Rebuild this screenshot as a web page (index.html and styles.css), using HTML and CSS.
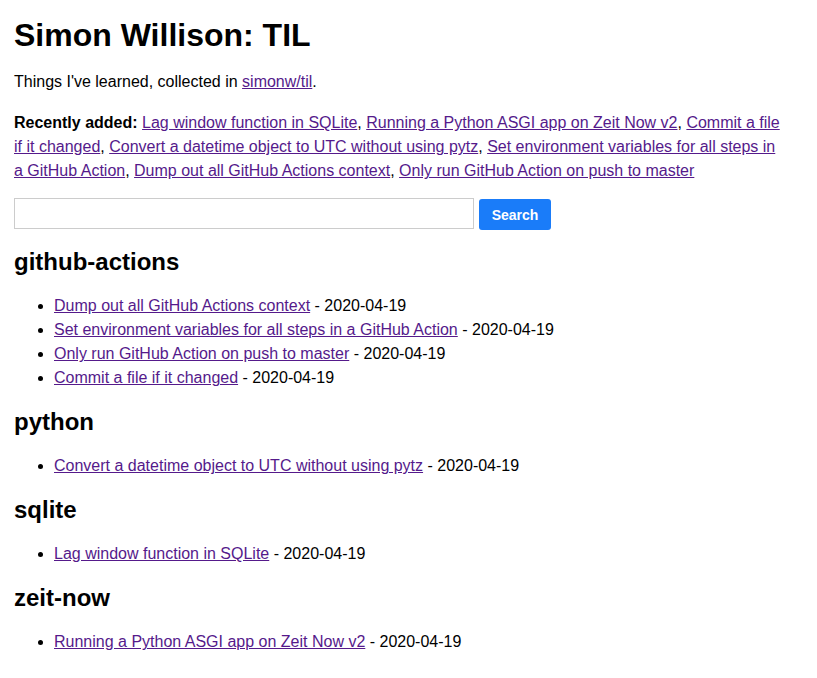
FILE: index.html
```html
<!DOCTYPE html>
<html>
<head>
<meta charset="utf-8">
<title>Simon Willison: TIL</title>
<link rel="stylesheet" href="styles.css">
</head>
<body>
<h1 class="title">Simon Willison: TIL</h1>
<p class="intro">Things I've learned, collected in <a href="#">simonw/til</a>.</p>
<p class="recent"><strong>Recently added:</strong> <a href="#">Lag window function in SQLite</a>, <a href="#">Running a Python ASGI app on Zeit Now v2</a>, <a href="#">Commit a file if it changed</a>, <a href="#">Convert a datetime object to UTC without using pytz</a>, <a href="#">Set environment variables for all steps in a GitHub Action</a>, <a href="#">Dump out all GitHub Actions context</a>, <a href="#">Only run GitHub Action on push to master</a></p>
<form class="search">
<input class="search-input" type="search" name="q">
<button class="search-button" type="button">Search</button>
</form>
<h2 class="topic">github-actions</h2>
<ul class="items">
<li><a href="#">Dump out all GitHub Actions context</a> - 2020-04-19</li>
<li><a href="#">Set environment variables for all steps in a GitHub Action</a> - 2020-04-19</li>
<li><a href="#">Only run GitHub Action on push to master</a> - 2020-04-19</li>
<li><a href="#">Commit a file if it changed</a> - 2020-04-19</li>
</ul>
<h2 class="topic">python</h2>
<ul class="items">
<li><a href="#">Convert a datetime object to UTC without using pytz</a> - 2020-04-19</li>
</ul>
<h2 class="topic">sqlite</h2>
<ul class="items">
<li><a href="#">Lag window function in SQLite</a> - 2020-04-19</li>
</ul>
<h2 class="topic">zeit-now</h2>
<ul class="items">
<li><a href="#">Running a Python ASGI app on Zeit Now v2</a> - 2020-04-19</li>
</ul>
</body>
</html>
```

FILE: styles.css
```css
html { background: #fff; }
body {
  margin: 0;
  padding: 0 14px;
  max-width: 772px;
  font-family: "Liberation Sans", Arial, Helvetica, sans-serif;
  font-size: 16px;
  line-height: 1.5;
  color: #000;
}
a { color: #551a8b; }
.title {
  font-size: 32px;
  line-height: 1.2;
  margin: 16px 0 14px;
}
.intro { margin: 16px 0 17px; }
.recent { margin: 17px 0 15px; }
.search {
  display: flex;
  align-items: flex-start;
  gap: 5px;
  margin: 0 0 16px;
}
.search-input {
  width: 460px;
  height: 31px;
  box-sizing: border-box;
  border: 1px solid #ccc;
  margin: 0;
  padding: 4px;
  font-size: 16px;
}
.search-button {
  background: #1a7cf9;
  color: #fff;
  border: none;
  border-radius: 3px;
  height: 31px;
  width: 72px;
  font-family: "Liberation Sans", Arial, sans-serif;
  font-size: 14px;
  font-weight: bold;
  margin: 1px 0 0;
}
.topic {
  font-size: 24px;
  line-height: 32px;
  margin: 16px 0;
}
.items {
  margin: 16px 0;
  padding-left: 40px;
}
```
